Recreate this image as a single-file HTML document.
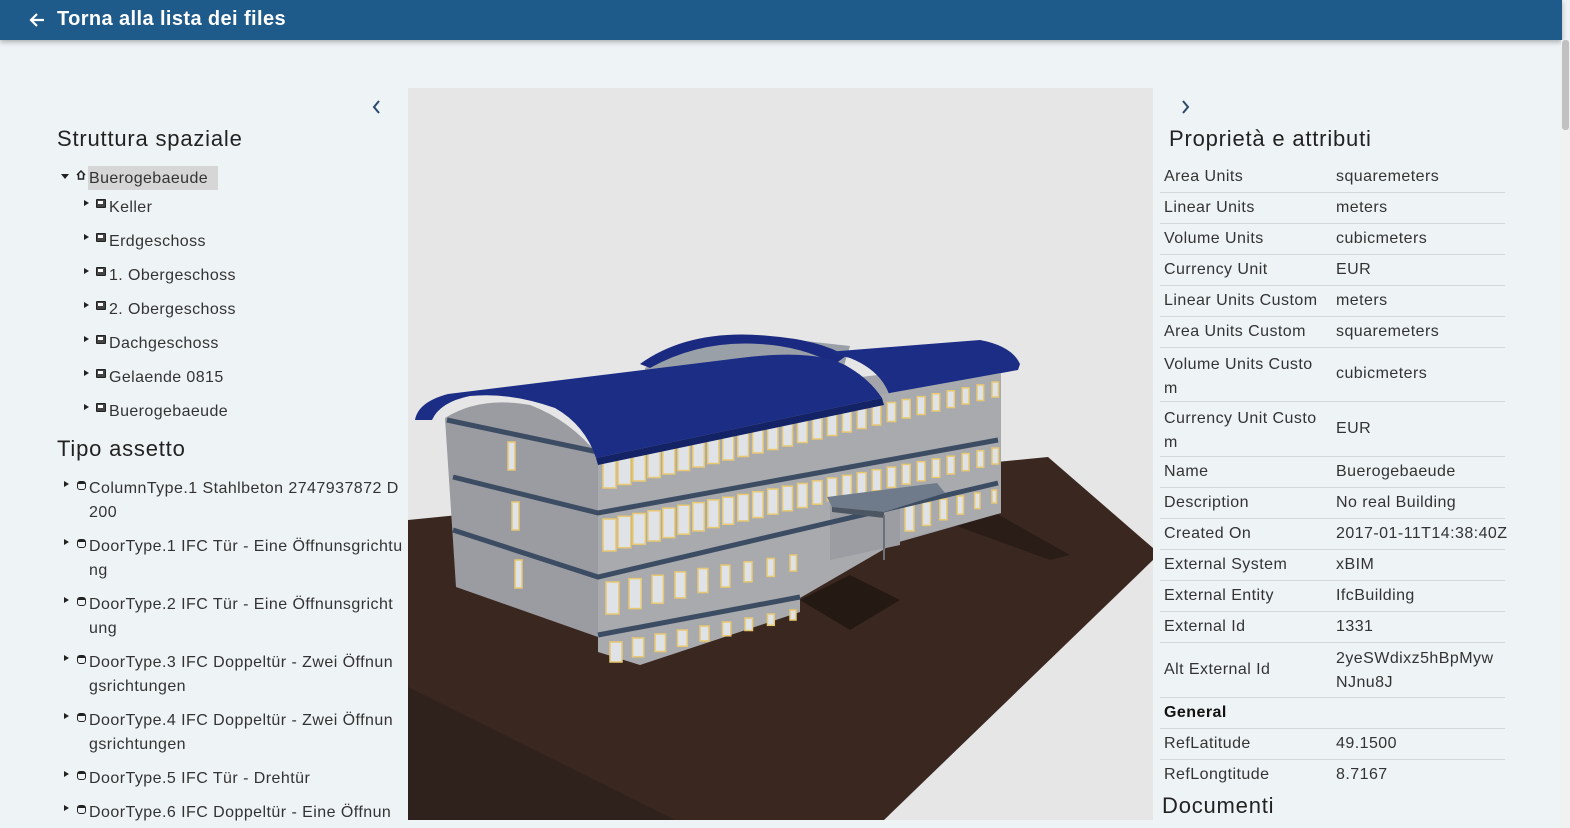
<!DOCTYPE html>
<html><head><meta charset="utf-8">
<style>
*{margin:0;padding:0;box-sizing:border-box}
body{width:1570px;height:828px;overflow:hidden;background:#eef3f6;font-family:"Liberation Sans",sans-serif;color:#333;position:relative}
.hdr{position:absolute;left:0;top:0;width:1562px;height:40px;background:#1e5a8a;box-shadow:0 2px 5px rgba(0,0,0,.3)}
.hdr span{position:absolute;left:57px;top:8px;color:#fff;font-size:20px;font-weight:bold;letter-spacing:0.4px}
.t{position:absolute;white-space:nowrap;letter-spacing:0.4px}
h2{position:absolute;font-weight:normal;font-size:22px;color:#222;white-space:nowrap;letter-spacing:0.8px}
.tri{position:absolute;width:0;height:0;border-top:3.5px solid transparent;border-bottom:3.5px solid transparent;border-left:5px solid #222}
.trd{position:absolute;width:0;height:0;border-left:4px solid transparent;border-right:4px solid transparent;border-top:5px solid #222}
.ic{position:absolute;width:10px;height:9px;border:1.5px solid #222;border-radius:1px;background:linear-gradient(#fff 0 0) no-repeat 1px 1px/5px 3px,#444}
.ic2{position:absolute;width:9px;height:9px;border:1.5px solid #222;border-radius:3px;border-top-width:3px}
.lt{position:absolute;left:89px;font-size:16px;line-height:24px;color:#333;width:320px;letter-spacing:0.45px;white-space:nowrap}
.row{position:absolute;left:1160px;width:345px;border-bottom:1px solid #d4d8db;font-size:16px;color:#333;letter-spacing:0.45px}
.row .a{position:absolute;left:4px;white-space:nowrap}
.row .b{position:absolute;left:176px;white-space:nowrap}
.sb{position:absolute;left:1561px;top:40px;width:9px;height:788px;background:#f1f1f1}
.sb i{position:absolute;left:1px;top:0;width:7px;height:90px;background:#c1c1c1;border-radius:3px}
</style></head><body>
<div class="hdr"><svg style="position:absolute;left:28px;top:11px" width="18" height="18" viewBox="0 0 18 18"><path d="M16 9H3M9 3L3 9l6 6" stroke="#fff" stroke-width="2.2" fill="none"/></svg><span>Torna alla lista dei files</span></div>
<div class="sb"><i></i></div>

<svg style="position:absolute;left:370px;top:99px" width="12" height="16"><path d="M9 2L4 8l5 6" stroke="#2a4a6a" stroke-width="2" fill="none"/></svg>
<h2 style="left:57px;top:126px">Struttura spaziale</h2>
<div class="trd" style="left:61px;top:174px"></div>
<svg style="position:absolute;left:76px;top:170px" width="10" height="10"><path d="M1 5L5 1l4 4M2.5 4v5h5V4" stroke="#222" stroke-width="1.5" fill="none"/></svg>
<div class="t" style="left:88px;top:166px;height:24px;width:130px;background:#d6d6d6"></div>
<div class="t" style="left:89px;top:168px;font-size:16px;line-height:22px">Buerogebaeude</div>

<div class="tri" style="left:84px;top:200px"></div><div class="ic" style="left:96px;top:199px"></div><div class="t" style="left:109px;top:197px;font-size:16px;line-height:22px">Keller</div>
<div class="tri" style="left:84px;top:234px"></div><div class="ic" style="left:96px;top:233px"></div><div class="t" style="left:109px;top:231px;font-size:16px;line-height:22px">Erdgeschoss</div>
<div class="tri" style="left:84px;top:268px"></div><div class="ic" style="left:96px;top:267px"></div><div class="t" style="left:109px;top:265px;font-size:16px;line-height:22px">1. Obergeschoss</div>
<div class="tri" style="left:84px;top:302px"></div><div class="ic" style="left:96px;top:301px"></div><div class="t" style="left:109px;top:299px;font-size:16px;line-height:22px">2. Obergeschoss</div>
<div class="tri" style="left:84px;top:336px"></div><div class="ic" style="left:96px;top:335px"></div><div class="t" style="left:109px;top:333px;font-size:16px;line-height:22px">Dachgeschoss</div>
<div class="tri" style="left:84px;top:370px"></div><div class="ic" style="left:96px;top:369px"></div><div class="t" style="left:109px;top:367px;font-size:16px;line-height:22px">Gelaende 0815</div>
<div class="tri" style="left:84px;top:404px"></div><div class="ic" style="left:96px;top:403px"></div><div class="t" style="left:109px;top:401px;font-size:16px;line-height:22px">Buerogebaeude</div>

<h2 style="left:57px;top:436px">Tipo assetto</h2>
<div class="tri" style="left:64px;top:481px"></div><div class="ic2" style="left:77px;top:481px"></div><div class="lt" style="top:477px">ColumnType.1 Stahlbeton 2747937872 D<br>200</div>
<div class="tri" style="left:64px;top:539px"></div><div class="ic2" style="left:77px;top:539px"></div><div class="lt" style="top:535px">DoorType.1 IFC Tür - Eine Öffnunsgrichtu<br>ng</div>
<div class="tri" style="left:64px;top:597px"></div><div class="ic2" style="left:77px;top:597px"></div><div class="lt" style="top:593px">DoorType.2 IFC Tür - Eine Öffnunsgricht<br>ung</div>
<div class="tri" style="left:64px;top:655px"></div><div class="ic2" style="left:77px;top:655px"></div><div class="lt" style="top:651px">DoorType.3 IFC Doppeltür - Zwei Öffnun<br>gsrichtungen</div>
<div class="tri" style="left:64px;top:713px"></div><div class="ic2" style="left:77px;top:713px"></div><div class="lt" style="top:709px">DoorType.4 IFC Doppeltür - Zwei Öffnun<br>gsrichtungen</div>
<div class="tri" style="left:64px;top:771px"></div><div class="ic2" style="left:77px;top:771px"></div><div class="lt" style="top:767px">DoorType.5 IFC Tür - Drehtür</div>
<div class="tri" style="left:64px;top:805px"></div><div class="ic2" style="left:77px;top:805px"></div><div class="lt" style="top:801px">DoorType.6 IFC Doppeltür - Eine Öffnun</div>

<svg id="v" style="position:absolute;left:408px;top:88px" width="745" height="732" viewBox="408 88 745 732">
<rect x="408" y="88" width="745" height="732" fill="#e6e6e6"/>
<polygon points="408,520 1048,457 1153,548 1153,560 884,820 408,820" fill="#3a2820"/>
<polygon points="408,687 675,820 408,820" fill="#2f211b"/>
<polygon points="800,600 850,630 900,600 850,575" fill="#241913"/>
<polygon points="940,520 1050,560 1070,555 990,510" fill="#2a1d17"/>
<path d="M645,368 Q700,332 760,336 L850,346 L836,392 L650,392 Z" fill="#9aa0a8"/>
<path d="M640,364 Q690,328 770,336 Q820,340 846,356 L835,364 Q800,346 760,344 Q700,340 650,368 Z" fill="#1a2a80"/>
<polygon points="836,380 1001,360 1001,513 836,560" fill="#a3a5aa"/>
<path d="M827,352 L980,340 Q1012,346 1020,364 L1018,370 L889,394 Q880,370 850,358 Z" fill="#1c2d86"/>
<path d="M445,418 Q480,396 530,405 Q570,420 598,455 L598,637 L456,587 Z" fill="#9a9ca1"/>
<polygon points="598,455 840,402 1001,373 1001,513 900,540 800,598 800,612 640,665 598,652" fill="#a8aaae"/>
<polygon points="830,505 900,495 900,545 830,560" fill="#9b9da2"/>
<g id="win"></g>
<g stroke="#3c4c63" stroke-width="5" fill="none">
<path d="M447,420 L598,452"/><path d="M453,477 L598,513 L998,440"/><path d="M453,530 L598,577 L998,483"/><path d="M598,635 L800,597"/>
</g>
<polygon points="827,497 937,483 945,493 884,512 832,507" fill="#6f7b8a"/>
<polygon points="832,507 884,512 884,518 832,512" fill="#4c5663"/>
<line x1="884" y1="515" x2="884" y2="560" stroke="#6a6f78" stroke-width="2"/>
<path d="M415,420 Q418,402 448,394 L740,358 Q820,348 850,368 Q870,380 882,398 L596,458 Q585,425 555,408 Q510,392 470,396 Q440,402 432,420 Z" fill="#1c2d86"/>
<path d="M596,458 L882,398 L884,405 L598,465 Z" fill="#142266"/>
</svg>

<svg style="position:absolute;left:1180px;top:99px" width="12" height="16"><path d="M3 2l5 6-5 6" stroke="#2a4a6a" stroke-width="2" fill="none"/></svg>
<h2 style="left:1169px;top:126px">Proprietà e attributi</h2>

<div class="row" style="top:162px;height:31px"><span class="a" style="top:6px">Area Units</span><span class="b" style="top:6px">squaremeters</span></div>
<div class="row" style="top:193px;height:31px"><span class="a" style="top:6px">Linear Units</span><span class="b" style="top:6px">meters</span></div>
<div class="row" style="top:224px;height:31px"><span class="a" style="top:6px">Volume Units</span><span class="b" style="top:6px">cubicmeters</span></div>
<div class="row" style="top:255px;height:31px"><span class="a" style="top:6px">Currency Unit</span><span class="b" style="top:6px">EUR</span></div>
<div class="row" style="top:286px;height:31px"><span class="a" style="top:6px">Linear Units Custom</span><span class="b" style="top:6px">meters</span></div>
<div class="row" style="top:317px;height:31px"><span class="a" style="top:6px">Area Units Custom</span><span class="b" style="top:6px">squaremeters</span></div>
<div class="row" style="top:348px;height:54px"><span class="a" style="top:5px;line-height:24px">Volume Units Custo<br>m</span><span class="b" style="top:17px">cubicmeters</span></div>
<div class="row" style="top:402px;height:55px"><span class="a" style="top:5px;line-height:24px">Currency Unit Custo<br>m</span><span class="b" style="top:18px">EUR</span></div>
<div class="row" style="top:457px;height:31px"><span class="a" style="top:6px">Name</span><span class="b" style="top:6px">Buerogebaeude</span></div>
<div class="row" style="top:488px;height:31px"><span class="a" style="top:6px">Description</span><span class="b" style="top:6px">No real Building</span></div>
<div class="row" style="top:519px;height:31px"><span class="a" style="top:6px">Created On</span><span class="b" style="top:6px">2017-01-11T14:38:40Z</span></div>
<div class="row" style="top:550px;height:31px"><span class="a" style="top:6px">External System</span><span class="b" style="top:6px">xBIM</span></div>
<div class="row" style="top:581px;height:31px"><span class="a" style="top:6px">External Entity</span><span class="b" style="top:6px">IfcBuilding</span></div>
<div class="row" style="top:612px;height:31px"><span class="a" style="top:6px">External Id</span><span class="b" style="top:6px">1331</span></div>
<div class="row" style="top:643px;height:55px"><span class="a" style="top:18px">Alt External Id</span><span class="b" style="top:4px;line-height:24px">2yeSWdixz5hBpMyw<br>NJnu8J</span></div>
<div class="row" style="top:698px;height:31px"><span class="a" style="top:6px;font-weight:bold;color:#111">General</span></div>
<div class="row" style="top:729px;height:31px"><span class="a" style="top:6px">RefLatitude</span><span class="b" style="top:6px">49.1500</span></div>
<div class="row" style="top:760px;height:28px;border:none"><span class="a" style="top:6px">RefLongtitude</span><span class="b" style="top:6px">8.7167</span></div>
<h2 style="left:1162px;top:793px">Documenti</h2>

<script>
var g=document.getElementById('win'),s='';
function row(x0,y0,x1,y1,n,h,w0){for(var i=0;i<n;i++){var t=i/(n-1),x=x0+(x1-x0)*t,y=y0+(y1-y0)*t,sc=1-0.5*t,w=w0*sc,hh=h*sc;
s+='<rect x="'+x.toFixed(1)+'" y="'+y.toFixed(1)+'" width="'+w.toFixed(1)+'" height="'+hh.toFixed(1)+'" fill="#dfe3e8" stroke="#e8c870" stroke-width="1.5"/>';}}
row(603,458,992,382,27,30,13);
row(603,519,992,448,27,32,13);
row(606,582,790,555,9,32,13);
row(610,642,790,610,9,20,12);
row(905,505,992,490,6,26,9);
s+='<rect x="508" y="442" width="7" height="28" fill="#dfe3e8" stroke="#e8c870" stroke-width="1.5"/>';
s+='<rect x="512" y="502" width="7" height="28" fill="#dfe3e8" stroke="#e8c870" stroke-width="1.5"/>';
s+='<rect x="515" y="560" width="7" height="28" fill="#dfe3e8" stroke="#e8c870" stroke-width="1.5"/>';
g.innerHTML=s;
</script>
</body></html>
